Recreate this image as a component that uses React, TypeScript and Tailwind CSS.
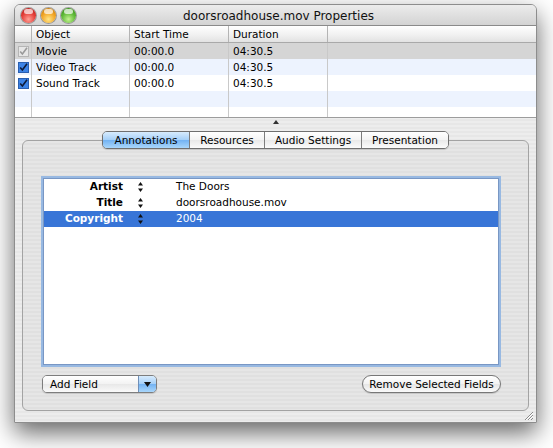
import React from 'react';

const stripes =
  "bg-[image:repeating-linear-gradient(180deg,#ededed_0px,#ededed_2px,#e7e7e7_2px,#e7e7e7_4px)]";

function Light({ color }: { color: 'red' | 'yellow' | 'green' }) {
  const bg =
    color === 'red'
      ? 'bg-[radial-gradient(circle_at_50%_75%,#ffa095_0%,#e5403a_50%,#a8140f_100%)]'
      : color === 'yellow'
      ? 'bg-[radial-gradient(circle_at_50%_75%,#ffe585_0%,#f2a526_50%,#b36c06_100%)]'
      : 'bg-[radial-gradient(circle_at_50%_75%,#c4f290_0%,#5fba38_50%,#2d7d12_100%)]';
  return (
    <div className={`relative w-[15px] h-[15px] rounded-full ${bg} shadow-[0_0_0_1px_rgba(0,0,0,0.3)]`}>
      <div className="absolute left-[3px] top-[1px] w-[9px] h-[5px] rounded-full bg-white/70" />
    </div>
  );
}

function Check({ dim }: { dim?: boolean }) {
  return (
    <svg width="11" height="11" viewBox="0 0 11 11">
      <rect x="0.5" y="0.5" width="10" height="10" fill={dim ? '#e6e6e6' : '#3c83e6'} stroke={dim ? '#b5b5b5' : '#2a5fb0'} />
      <path d="M2.2 5.4 L4.4 8 L9 1.8" fill="none" stroke={dim ? '#9a9a9a' : '#0d1b3a'} strokeWidth="1.6" />
    </svg>
  );
}

function UpDown() {
  return (
    <svg width="5" height="10" viewBox="0 0 5 10">
      <path d="M2.5 0 L5 3.5 L0 3.5 Z" fill="#111" />
      <path d="M2.5 10 L5 6.5 L0 6.5 Z" fill="#111" />
    </svg>
  );
}

const rows = [
  { name: 'Movie', start: '00:00.0', dur: '04:30.5', bg: 'bg-[#d5d5d5]', dim: true },
  { name: 'Video Track', start: '00:00.0', dur: '04:30.5', bg: 'bg-[#edf3fe]' },
  { name: 'Sound Track', start: '00:00.0', dur: '04:30.5', bg: 'bg-white' },
];

const fields = [
  { label: 'Artist', value: 'The Doors' },
  { label: 'Title', value: 'doorsroadhouse.mov' },
  { label: 'Copyright', value: '2004', selected: true },
];

const tabs = ['Annotations', 'Resources', 'Audio Settings', 'Presentation'];

export default function App() {
  return (
    <div className="w-[553px] h-[448px] bg-white pt-[4px] pl-[14px] font-['Lucida_Grande','DejaVu_Sans',sans-serif] text-[10.5px] text-black">
      <div className={`relative w-[523px] h-[419px] rounded-t-[6px] flex flex-col overflow-hidden border border-[#8d8d8d] ${stripes} shadow-[0_10px_24px_rgba(0,0,0,0.6)]`}>
        {/* Title bar */}
        <div className="relative h-[21px] flex items-center border-b border-[#8a8a8a] bg-[linear-gradient(#ececec,#d3d3d3)]">
          <div className="flex items-center gap-[5px] pl-[6px] pt-[1px]">
            <Light color="red" />
            <Light color="yellow" />
            <Light color="green" />
          </div>
          <div className="absolute inset-0 flex items-center justify-center text-[12px] text-[#111] pl-[6px] pt-[1px]">
            doorsroadhouse.mov Properties
          </div>
        </div>

        {/* Table */}
        <div className="bg-white border-b border-[#9c9c9c]">
          <div className="flex h-[17px] border-b border-[#a9a9a9] bg-[linear-gradient(#ffffff,#f1f1f1_55%,#e2e2e2)]">
            <div className="w-[17px] border-r border-[#b4b4b4]" />
            <div className="w-[98px] border-r border-[#b4b4b4] pl-[4px] leading-[16px]">Object</div>
            <div className="w-[99px] border-r border-[#b4b4b4] pl-[4px] leading-[16px]">Start Time</div>
            <div className="w-[99px] border-r border-[#b4b4b4] pl-[4px] leading-[16px]">Duration</div>
            <div className="flex-1" />
          </div>
          {rows.map((r) => (
            <div key={r.name} className={`flex h-[16px] ${r.bg}`}>
              <div className="w-[17px] border-r border-[#c9c9c9] flex items-center justify-center pl-[1px]">
                <Check dim={r.dim} />
              </div>
              <div className="w-[98px] border-r border-[#c9c9c9] pl-[4px] leading-[16px]">{r.name}</div>
              <div className="w-[99px] border-r border-[#c9c9c9] pl-[4px] leading-[16px]">{r.start}</div>
              <div className="w-[99px] border-r border-[#c9c9c9] pl-[4px] leading-[16px]">{r.dur}</div>
              <div className="flex-1" />
            </div>
          ))}
          {['bg-[#edf3fe] h-[16px]', 'bg-white h-[10px]'].map((c) => (
            <div key={c} className={`flex ${c}`}>
              <div className="w-[17px] border-r border-[#c9c9c9]" />
              <div className="w-[98px] border-r border-[#c9c9c9]" />
              <div className="w-[99px] border-r border-[#c9c9c9]" />
              <div className="w-[99px] border-r border-[#c9c9c9]" />
              <div className="flex-1" />
            </div>
          ))}
        </div>

        {/* Splitter caret */}
        <div className="h-[13px] flex justify-center pt-[2px]">
          <svg width="6" height="4" viewBox="0 0 6 4" className="ml-[1px]">
            <path d="M3 0 L6 4 L0 4 Z" fill="#333" />
          </svg>
        </div>

        {/* Tab view */}
        <div className="mx-[7px]">
          <div className="relative z-10 flex justify-center h-[18px]">
            <div className="flex rounded-[5px] border border-[#6f6f6f] overflow-hidden shadow-[0_1px_1px_rgba(0,0,0,0.15)]">
              {tabs.map((t, i) => (
                <div
                  key={t}
                  className={`h-[16px] leading-[16px] text-center ${i > 0 ? 'border-l border-[#7d7d7d]' : ''} ${
                    i === 0
                      ? 'w-[86px] bg-[linear-gradient(#d7ebfd,#a6d0f8_48%,#73b3f3_52%,#a9d6fb)]'
                      : 'bg-[linear-gradient(#ffffff,#f4f4f4_48%,#e9e9e9_52%,#fbfbfb)]'
                  } ${i === 1 ? 'w-[75px]' : i === 2 ? 'w-[97px]' : i === 3 ? 'w-[87px]' : ''}`}
                >
                  {t}
                </div>
              ))}
            </div>
          </div>
          <div className="-mt-[9px] h-[271px] rounded-[6px] border border-[#a3a3a3] bg-[image:repeating-linear-gradient(180deg,#e6e6e6_0px,#e6e6e6_2px,#e0e0e0_2px,#e0e0e0_4px)] pt-[35px] pl-[18px] pr-[27px] flex flex-col">
            <div className="h-[191px] bg-white border-2 border-[#98b9e2] shadow-[inset_0_0_0_1px_#7997c4] pt-[1px] px-[1px]">
              {fields.map((f) => (
                <div key={f.label} className={`flex items-center h-[16px] ${f.selected ? 'bg-[#3875d7] text-white' : ''}`}>
                  <div className="w-[79px] text-right font-bold">{f.label}</div>
                  <div className="w-[52px] flex justify-start pl-[15px]">
                    <UpDown />
                  </div>
                  <div className="pl-[1px]">{f.value}</div>
                </div>
              ))}
            </div>
            <div className="mt-[8px] flex justify-between">
              <div className="ml-[1px] w-[115px] h-[18px] flex rounded-[5px] border border-[#7d7d7d] overflow-hidden shadow-[0_1px_1px_rgba(0,0,0,0.15)]">
                <div className="flex-1 pl-[7px] leading-[16px] bg-[linear-gradient(#ffffff,#f3f3f3_48%,#e8e8e8_52%,#fafafa)]">
                  Add Field
                </div>
                <div className="w-[18px] flex items-center justify-center border-l border-[#6f8fb8] bg-[linear-gradient(#d7ebfd,#a6d0f8_48%,#73b3f3_52%,#a9d6fb)]">
                  <svg width="7" height="5" viewBox="0 0 7 5">
                    <path d="M0 0 L7 0 L3.5 5 Z" fill="#111" />
                  </svg>
                </div>
              </div>
              <div className="w-[139px] h-[18px] rounded-full border border-[#777] leading-[16px] text-center bg-[linear-gradient(#ffffff,#f3f3f3_48%,#e6e6e6_52%,#fafafa)] shadow-[0_1px_1px_rgba(0,0,0,0.15)]">
                Remove Selected Fields
              </div>
            </div>
          </div>
        </div>

        {/* Resize grip */}
        <svg width="12" height="12" viewBox="0 0 12 12" className="absolute right-[2px] bottom-[1px]">
          <path d="M11 3 L3 11 M11 6 L6 11 M11 9 L9 11" stroke="#8a8a8a" strokeWidth="1" />
          <path d="M11 4 L4 11 M11 7 L7 11" stroke="#fff" strokeWidth="1" />
        </svg>
      </div>
    </div>
  );
}
